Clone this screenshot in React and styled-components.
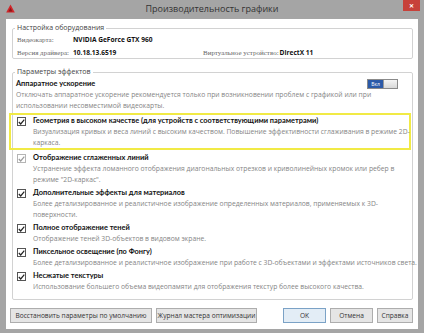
import React from 'react'
import styled, { createGlobalStyle } from 'styled-components'

const Global = createGlobalStyle`
    html, body {
        margin: 0;
        padding: 0;
        background: #a5a5a5;
    }
    * {
        box-sizing: border-box;
    }
`

const options = [
    {
        title: 'Геометрия в высоком качестве (для устройств с соответствующими параметрами)',
        text: ['Визуализация кривых и веса линий с высоким качеством. Повышение эффективности сглаживания в режиме 2D-', 'каркаса.'],
        highlight: true,
    },
    {
        title: 'Отображение сглаженных линий',
        text: ['Устранение эффекта ломанного отображения диагональных отрезков и криволинейных кромок или ребер в', 'режиме "2D-каркас".'],
        dim: true,
    },
    {
        title: 'Дополнительные эффекты для материалов',
        text: ['Более детализированное и реалистичное изображение определенных материалов, применяемых к 3D-', 'поверхности.'],
    },
    {
        title: 'Полное отображение теней',
        text: ['Отображение теней 3D-объектов в видовом экране.'],
    },
    {
        title: 'Пиксельное освещение (по Фонгу)',
        text: ['Более детализированное и реалистичное изображение при работе с 3D-объектами и эффектами источников света.'],
    },
    {
        title: 'Несжатые текстуры',
        text: ['Использование большего объема видеопамяти для отображения текстур более высокого качества.'],
    },
]

const App = () => {
  return (
    <>
      <Global />
      <Window>
        <TitleBar>
          <Logo viewBox="0 0 10 10">
            <polygon points="5,0.5 9.8,9.5 0.2,9.5" fill="#d0262a" />
            <polygon points="5,4.2 7.2,8.3 2.8,8.3" fill="#8e1518" />
          </Logo>
          <Title>Производительность графики</Title>
          <Close>✕</Close>
        </TitleBar>
        <Client>
          <Group $h={36}>
            <Legend>Настройка оборудования</Legend>
            <InfoRow>
              <InfoLabel $w={55}>Видеокарта:</InfoLabel>
              <InfoValue>NVIDIA GeForce GTX 960</InfoValue>
            </InfoRow>
            <InfoRow>
              <InfoCell>
                <InfoLabel $w={55}>Версия драйвера:</InfoLabel>
                <InfoValue>10.18.13.6519</InfoValue>
              </InfoCell>
              <InfoCell>
                <InfoLabel>Виртуальное устройство:</InfoLabel>
                <InfoValue>DirectX 11</InfoValue>
              </InfoCell>
            </InfoRow>
          </Group>

          <Group $h={233} $top={8}>
            <Legend>Параметры эффектов</Legend>
            <Accel>
              <AccelHead>
                <Heading>Аппаратное ускорение</Heading>
                <Toggle>
                  <ToggleOn>Вкл</ToggleOn>
                  <ToggleOff />
                </Toggle>
              </AccelHead>
              <Desc>Отключать аппаратное ускорение рекомендуется только при возникновении проблем с графикой или при</Desc>
              <Desc>использовании несовместимой видеокарты.</Desc>
            </Accel>
            {options.map((o) => (
              <Option key={o.title} $highlight={o.highlight}>
                <Check $dim={o.dim}>
                  <svg width="7" height="6" viewBox="0 0 7 6">
                    <path d="M0.8 3 L2.7 5 L6.3 0.7" fill="none" stroke={o.dim ? '#9a9a9a' : '#222'} strokeWidth="1.2" />
                  </svg>
                </Check>
                <OptionBody>
                  <Heading>{o.title}</Heading>
                  {o.text.map((t) => (
                    <Desc key={t}>{t}</Desc>
                  ))}
                </OptionBody>
              </Option>
            ))}
          </Group>

          <Buttons>
            <Button $w={142}>Восстановить параметры по умолчанию</Button>
            <Button $w={101}>Журнал мастера оптимизации</Button>
            <Spacer />
            <Button $w={43} $primary>OK</Button>
            <Button $w={43}>Отмена</Button>
            <Button $w={36}>Справка</Button>
          </Buttons>
        </Client>
      </Window>
    </>
  )
}

export default App

const Window = styled.div`
    width: 424px;
    height: 333px;
    background: #a5a5a5;
    display: flex;
    flex-direction: column;
    font-family: "Open Sans", "Noto Sans", sans-serif;
    overflow: hidden;
`
const TitleBar = styled.div`
    height: 19px;
    display: flex;
    align-items: flex-start;
    position: relative;
`
const Logo = styled.svg`
    width: 9px;
    height: 9px;
    margin: 4px 0 0 6px;
`
const Title = styled.div`
    position: absolute;
    left: 0;
    right: 0;
    top: 2px;
    text-align: center;
    font-size: 9px;
    color: #333;
`
const Close = styled.div`
    margin-left: auto;
    margin-right: 4px;
    width: 17px;
    height: 11px;
    background: #c7413a;
    color: #fff;
    font-size: 6px;
    font-weight: bold;
    display: flex;
    align-items: center;
    justify-content: center;
`
const Client = styled.div`
    flex: 1;
    margin: 0 6px 4px 6px;
    background: #fff;
    padding: 4px 5px 0 6px;
    display: flex;
    flex-direction: column;
`
const Group = styled.fieldset`
    margin: ${(p) => p.$top || 0}px 0 0 0;
    padding: 0;
    height: ${(p) => p.$h}px;
    border: 1px solid #d2d2d2;
    border-radius: 2px;
    min-width: 0;
`
const Legend = styled.legend`
    font-size: 7px;
    color: #444;
    padding: 0 2px;
    margin-left: 2px;
    line-height: 10px;
`
const InfoRow = styled.div`
    display: flex;
    align-items: center;
    height: 13px;
    padding-left: 4px;
    font-family: "Liberation Serif", serif;
    font-size: 7px;
`
const InfoCell = styled.div`
    display: flex;
    align-items: center;
    width: 186px;
`
const InfoLabel = styled.span`
    color: #666;
    width: ${(p) => (p.$w ? p.$w + 'px' : 'auto')};
    margin-right: 1px;
`
const InfoValue = styled.span`
    color: #111;
    font-family: "Open Sans", sans-serif;
    font-weight: bold;
    font-size: 6.6px;
`
const Accel = styled.div`
    padding: 1px 14px 0 3px;
`
const AccelHead = styled.div`
    display: flex;
    justify-content: space-between;
    align-items: center;
`
const Heading = styled.div`
    font-family: Lato, "Open Sans", sans-serif;
    font-size: 7.4px;
    font-weight: bold;
    color: #111;
    line-height: 11px;
`
const Desc = styled.div`
    font-size: 6.75px;
    color: #858585;
    line-height: 11px;
    white-space: nowrap;
`
const Toggle = styled.div`
    display: flex;
    width: 31px;
    height: 10px;
    border: 1px solid #8a8a8a;
`
const ToggleOn = styled.div`
    width: 15px;
    background: #2b5aa8;
    color: #fff;
    font-size: 5px;
    display: flex;
    align-items: center;
    justify-content: center;
`
const ToggleOff = styled.div`
    flex: 1;
    background: linear-gradient(#f4f4f4, #d8d8d8);
    border-left: 1px solid #9a9a9a;
`
const Option = styled.div`
    display: flex;
    align-items: flex-start;
    margin: ${(p) => (p.$highlight ? '2px 1px 1px -4px' : '0 2px 0 -3px')};
    padding: 0 0 0 6px;
    border: ${(p) => (p.$highlight ? '2px solid #f1ea45' : '1px solid transparent')};
`
const Check = styled.div`
    width: 9px;
    height: 9px;
    margin-top: 2px;
    border: 1px solid ${(p) => (p.$dim ? '#b5b5b5' : '#555')};
    display: flex;
    align-items: center;
    justify-content: center;
    flex-shrink: 0;
`
const OptionBody = styled.div`
    margin-left: 7px;
`
const Buttons = styled.div`
    display: flex;
    gap: 4px;
    margin: 8px 0 0 -2px;
`
const Spacer = styled.div`
    flex: 1;
`
const Button = styled.div`
    height: 15px;
    padding: 0 2px;
    width: ${(p) => (p.$w ? p.$w + 'px' : 'auto')};
    border: 1px solid ${(p) => (p.$primary ? '#7ba2c6' : '#adadad')};
    background: ${(p) => (p.$primary ? '#e3edf6' : '#e5e5e5')};
    font-size: 6.6px;
    color: #333;
    display: flex;
    align-items: center;
    justify-content: center;
    white-space: nowrap;
`
